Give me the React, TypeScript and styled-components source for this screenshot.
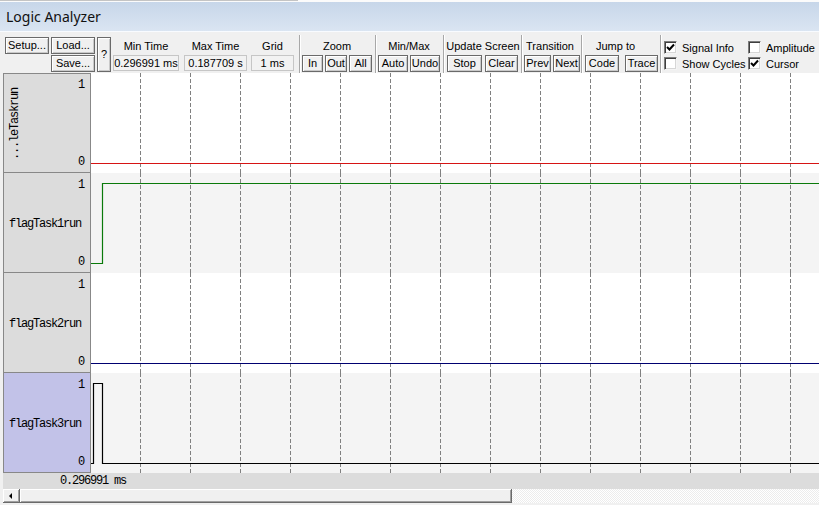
import React from "react";
import styled, { createGlobalStyle } from "styled-components";

const GlobalStyle = createGlobalStyle`
  html, body { margin: 0; padding: 0; background: #f0f0f0; overflow: hidden; }
  #root { width: 819px; height: 505px; }
`;

const MONO = `"Liberation Mono", "Courier New", monospace`;
const SANS = `"Liberation Sans", Arial, sans-serif`;

const Window = styled.div`
  width: 819px;
  height: 505px;
  display: flex;
  flex-direction: column;
  background: #f0f0f0;
  overflow: hidden;
  font-family: ${SANS};
  color: #000;
`;

const TopStrip = styled.div`
  height: 2px;
  background: #fbfbfb;
  display: flex;
`;

const TopStripEdge = styled.div`
  width: 298px;
  height: 1px;
  background: #c4c4c4;
`;

const TitleBar = styled.div`
  height: 29px;
  border-bottom: 1px solid #f8fbff;
  background: linear-gradient(#c7d6e9, #dae5f2);
  display: flex;
  align-items: center;
  padding-left: 6px;
  font-family: "Noto Sans", "Open Sans", sans-serif;
  font-size: 14px;
  color: #111;
`;

const Toolbar = styled.div`
  height: 41px;
  box-sizing: border-box;
  padding: 5px 0 0 5px;
  display: flex;
  font-size: 11px;
  background: #f0f0f0;
`;

const FileGrid = styled.div`
  display: grid;
  grid-template-columns: 44px 44px 14px;
  grid-template-rows: 17px 17px;
  column-gap: 2px;
  row-gap: 1px;
  height: 35px;
`;

const Btn = styled.div<{ $w?: number; $tall?: boolean; $col?: number; $row?: number }>`
  box-sizing: border-box;
  width: ${(p) => (p.$w ? `${p.$w}px` : "auto")};
  height: ${(p) => (p.$tall ? "35px" : "17px")};
  ${(p) => (p.$col ? `grid-column: ${p.$col};` : "")}
  ${(p) => (p.$row ? `grid-row: ${p.$row};` : "")}
  ${(p) => (p.$tall ? "grid-row: 1 / span 2;" : "")}
  display: flex;
  align-items: center;
  justify-content: center;
  background: #f0f0f0;
  border: 1px solid #6a6a6a;
  box-shadow: inset 1px 1px 0 #ffffff, inset -1px -1px 0 #c9c9c9;
  font-size: 11px;
  white-space: nowrap;
  padding-bottom: 1px;
`;

const Group = styled.div<{ $w: number; $ml: number }>`
  display: flex;
  flex-direction: column;
  width: ${(p) => p.$w}px;
  margin-left: ${(p) => p.$ml}px;
  flex-shrink: 0;
`;

const GroupLabel = styled.div<{ $shift?: number }>`
  height: 18px;
  display: flex;
  align-items: center;
  justify-content: center;
  white-space: nowrap;
  font-size: 11px;
  padding-right: ${(p) => p.$shift ?? 0}px;
`;

const BtnRow = styled.div<{ $gap: number }>`
  display: flex;
  gap: ${(p) => p.$gap}px;
`;

const Field = styled.div`
  height: 16px;
  box-sizing: border-box;
  border: 1px solid #c6c6c6;
  background: #f2f2f2;
  display: flex;
  align-items: center;
  justify-content: center;
  white-space: nowrap;
  font-size: 11px;
`;

const Sep = styled.div<{ $ml: number }>`
  width: 1px;
  height: 38px;
  margin-top: -2px;
  margin-left: ${(p) => p.$ml}px;
  background: #a8a8a8;
  border-right: 1px solid #ffffff;
  flex-shrink: 0;
`;

const CheckCol = styled.div<{ $w: number; $ml: number }>`
  width: ${(p) => p.$w}px;
  margin-left: ${(p) => p.$ml}px;
  padding-top: 4px;
  display: flex;
  flex-direction: column;
  gap: 3px;
  flex-shrink: 0;
`;

const CheckRow = styled.div`
  display: flex;
  align-items: center;
  gap: 5px;
  height: 13px;
  font-size: 11px;
  white-space: nowrap;
`;

const Box = styled.span`
  width: 13px;
  height: 13px;
  box-sizing: border-box;
  background: #fff;
  border: 1px solid;
  border-color: #7c7c7c #f4f4f4 #f4f4f4 #7c7c7c;
  box-shadow: inset 1px 1px 0 #3e3e3e, inset -1px -1px 0 #d6d6d6;
  display: flex;
  align-items: center;
  justify-content: center;
`;

const Signals = styled.div`
  display: flex;
  flex-direction: column;
  padding-left: 3px;
`;

const Row = styled.div`
  display: flex;
  height: 100px;
`;

const LabelCell = styled.div<{ $sel?: boolean; $first?: boolean }>`
  width: 88px;
  height: 100px;
  box-sizing: border-box;
  border: 1px solid #888888;
  border-top: ${(p) => (p.$first ? "1px solid #888888" : "none")};
  background: ${(p) => (p.$sel ? "#c2c2e8" : "#dcdcdc")};
  display: grid;
  grid-template-rows: 14px minmax(0, 1fr) 14px;
  padding: ${(p) => (p.$first ? "4px" : "5px")} 6px 3px 5px;
  font-family: ${MONO};
  font-size: 12px;
  letter-spacing: -1.2px;
  flex-shrink: 0;
`;

const Val = styled.div`
  text-align: right;
  line-height: 14px;
`;

const Name = styled.div<{ $vertical?: boolean }>`
  align-self: center;
  white-space: nowrap;
  ${(p) =>
    p.$vertical
      ? `writing-mode: vertical-rl; transform: rotate(180deg); justify-self: start; line-height: 11px; margin-left: 1px;`
      : ""}
`;

const Plot = styled.div<{ $alt: boolean }>`
  flex: 1;
  height: 100px;
  background: ${(p) => (p.$alt ? "#f4f4f4" : "#ffffff")};
  display: flex;
`;

const TimeBar = styled.div`
  height: 16px;
  margin-left: 3px;
  background: #dcdcdc;
  display: flex;
  align-items: center;
  padding-left: 57px;
  font-family: ${MONO};
  font-size: 12px;
  letter-spacing: -1.2px;
`;

const ScrollBar = styled.div`
  height: 14px;
  margin-left: 3px;
  display: flex;
  background-color: #f4f4f4;
  background-image: repeating-conic-gradient(#ffffff 0 25%, #ececec 0 50%);
  background-size: 2px 2px;
`;

const ScrollPart = styled.div<{ $w: number }>`
  width: ${(p) => p.$w}px;
  box-sizing: border-box;
  background: #f0f0f0;
  border-right: 1px solid #6a6a6a;
  border-bottom: 1px solid #6a6a6a;
  box-shadow: inset 1px 1px 0 #ffffff, inset -1px -1px 0 #a0a0a0;
  display: flex;
  align-items: center;
  justify-content: center;
`;

const GRID_X = Array.from({ length: 14 }, (_, i) => 49.5 + 50 * i);

type Sig = { name: string; color: string; pts: string; vertical?: boolean; sel?: boolean };

const SIGNALS: Sig[] = [
  { name: "...leTaskrun", color: "#d61414", pts: "0,90.5 728,90.5", vertical: true },
  { name: "flagTask1run", color: "#0a7a0a", pts: "0,90.5 11.5,90.5 11.5,10.5 728,10.5" },
  { name: "flagTask2run", color: "#000070", pts: "0,90.5 728,90.5" },
  {
    name: "flagTask3run",
    color: "#000000",
    pts: "0,90.5 2.5,90.5 2.5,10.5 11.5,10.5 11.5,90.5 728,90.5",
    sel: true,
  },
];

const Check = () => (
  <svg width="9" height="9" viewBox="0 0 9 9">
    <polyline points="1,4 3.5,6.5 8,1.5" fill="none" stroke="#000" strokeWidth="2" />
  </svg>
);

const Waveform = ({ color, pts }: { color: string; pts: string }) => (
  <svg width="728" height="100" viewBox="0 0 728 100">
    {GRID_X.map((x) => (
      <line key={x} x1={x} y1={0} x2={x} y2={100} stroke="#808080" strokeWidth="1" strokeDasharray="4 2" />
    ))}
    <polyline points={pts} fill="none" stroke={color} strokeWidth="1.2" />
  </svg>
);

export default function App() {
  return (
    <>
      <GlobalStyle />
      <Window>
        <TopStrip>
          <TopStripEdge />
        </TopStrip>
        <TitleBar>Logic Analyzer</TitleBar>
        <Toolbar>
          <FileGrid>
            <Btn $col={1} $row={1}>Setup...</Btn>
            <Btn $col={2} $row={1}>Load...</Btn>
            <Btn $col={2} $row={2}>Save...</Btn>
            <Btn $col={3} $tall>?</Btn>
          </FileGrid>
          <Group $w={66} $ml={2}>
            <GroupLabel>Min Time</GroupLabel>
            <Field>0.296991 ms</Field>
          </Group>
          <Group $w={63} $ml={5}>
            <GroupLabel>Max Time</GroupLabel>
            <Field>0.187709 s</Field>
          </Group>
          <Group $w={43} $ml={4}>
            <GroupLabel>Grid</GroupLabel>
            <Field>1 ms</Field>
          </Group>
          <Sep $ml={5} />
          <Group $w={70} $ml={1}>
            <GroupLabel>Zoom</GroupLabel>
            <BtnRow $gap={2}>
              <Btn $w={21}>In</Btn>
              <Btn $w={22}>Out</Btn>
              <Btn $w={23}>All</Btn>
            </BtnRow>
          </Group>
          <Sep $ml={3} />
          <Group $w={62} $ml={1}>
            <GroupLabel>Min/Max</GroupLabel>
            <BtnRow $gap={2}>
              <Btn $w={30}>Auto</Btn>
              <Btn $w={30}>Undo</Btn>
            </BtnRow>
          </Group>
          <Sep $ml={3} />
          <Group $w={72} $ml={2}>
            <GroupLabel>Update Screen</GroupLabel>
            <BtnRow $gap={3}>
              <Btn $w={35}>Stop</Btn>
              <Btn $w={33}>Clear</Btn>
            </BtnRow>
          </Group>
          <Sep $ml={2} />
          <Group $w={56} $ml={1}>
            <GroupLabel $shift={4}>Transition</GroupLabel>
            <BtnRow $gap={2}>
              <Btn $w={27}>Prev</Btn>
              <Btn $w={27}>Next</Btn>
            </BtnRow>
          </Group>
          <Sep $ml={1} />
          <Group $w={73} $ml={2}>
            <GroupLabel $shift={12}>Jump to</GroupLabel>
            <BtnRow $gap={6}>
              <Btn $w={34}>Code</Btn>
              <Btn $w={33}>Trace</Btn>
            </BtnRow>
          </Group>
          <Sep $ml={2} />
          <CheckCol $w={84} $ml={2}>
            <CheckRow>
              <Box>
                <Check />
              </Box>
              Signal Info
            </CheckRow>
            <CheckRow>
              <Box />
              Show Cycles
            </CheckRow>
          </CheckCol>
          <CheckCol $w={70} $ml={0}>
            <CheckRow>
              <Box />
              Amplitude
            </CheckRow>
            <CheckRow>
              <Box>
                <Check />
              </Box>
              Cursor
            </CheckRow>
          </CheckCol>
        </Toolbar>
        <Signals>
          {SIGNALS.map((s, i) => (
            <Row key={s.name}>
              <LabelCell $first={i === 0} $sel={s.sel}>
                <Val>1</Val>
                <Name $vertical={s.vertical}>{s.name}</Name>
                <Val>0</Val>
              </LabelCell>
              <Plot $alt={i % 2 === 1}>
                <Waveform color={s.color} pts={s.pts} />
              </Plot>
            </Row>
          ))}
        </Signals>
        <TimeBar>0.296991 ms</TimeBar>
        <ScrollBar>
          <ScrollPart $w={17}>
            <svg width="4" height="6" viewBox="0 0 4 6">
              <polygon points="3,0 0,3 3,6" fill="#000" />
            </svg>
          </ScrollPart>
          <ScrollPart $w={492} />
        </ScrollBar>
      </Window>
    </>
  );
}
